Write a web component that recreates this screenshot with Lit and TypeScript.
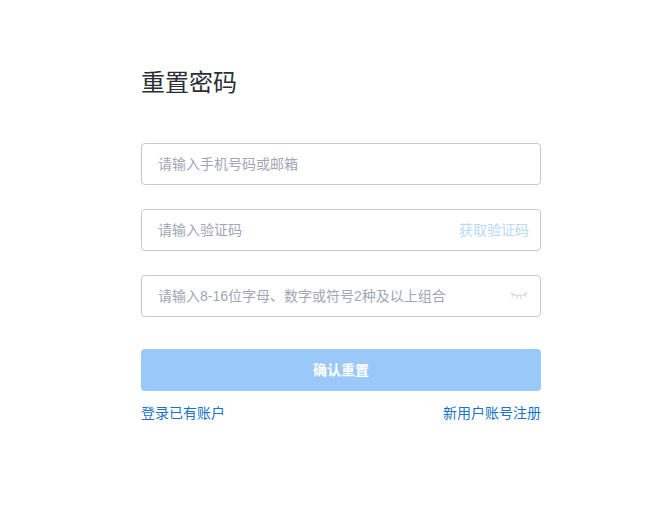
import { LitElement, html, css } from "lit";
import { customElement } from "lit/decorators.js";

@customElement("app-root")
export class AppRoot extends LitElement {
  static styles = css`
    :host {
      display: block;
      width: 657px;
      height: 528px;
      background: #fff;
      font-family: "Microsoft YaHei", "Liberation Sans", "Noto Sans CJK SC", sans-serif;
    }
    .form {
      width: 400px;
      margin-left: 141px;
      padding-top: 66px;
      display: flex;
      flex-direction: column;
    }
    h1 {
      margin: 0 0 43px;
      font-size: 24px;
      line-height: 34px;
      font-weight: 400;
      color: #2a2f36;
    }
    .field {
      box-sizing: border-box;
      height: 42px;
      margin-bottom: 24px;
      padding: 0 11px 0 16px;
      border: 1px solid #c5c8ce;
      border-radius: 4px;
      display: flex;
      align-items: center;
      justify-content: space-between;
      font-size: 14px;
      line-height: 20px;
    }
    .ph {
      color: #a0a6b8;
    }
    .code {
      color: #b8d9f7;
    }
    svg {
      display: block;
      width: 18px;
      height: 10px;
      margin-right: 1px;
    }
    button {
      height: 42px;
      margin-top: 8px;
      border: 0;
      border-radius: 4px;
      background: #99c8f9;
      color: #fff;
      font: 700 14px/20px "Microsoft YaHei", "Liberation Sans", "Noto Sans CJK SC", sans-serif;
      padding: 0;
    }
    .links {
      display: flex;
      justify-content: space-between;
      margin-top: 12px;
      font-size: 14px;
      line-height: 20px;
      color: #1a73c9;
    }
  `;

  render() {
    return html`
      <div class="form">
        <h1>重置密码</h1>
        <div class="field"><span class="ph">请输入手机号码或邮箱</span></div>
        <div class="field">
          <span class="ph">请输入验证码</span>
          <span class="code">获取验证码</span>
        </div>
        <div class="field">
          <span class="ph">请输入8-16位字母、数字或符号2种及以上组合</span>
          <svg viewBox="0 0 18 10" fill="none" stroke="#bcc0cc" stroke-width="0.7">
            <path d="M1 3.2 C5.5 4.6 12.5 4.6 17 3.2" />
            <path d="M1 1.2 L4 3.9 M17 1.2 L14 3.9 M1.5 6.2 L4 3.9 M16.5 6.2 L14 3.9 M7 4.3 L7.3 8 M11 4.3 L10.7 8" />
          </svg>
        </div>
        <button>确认重置</button>
        <div class="links"><span>登录已有账户</span><span>新用户账号注册</span></div>
      </div>
    `;
  }
}
